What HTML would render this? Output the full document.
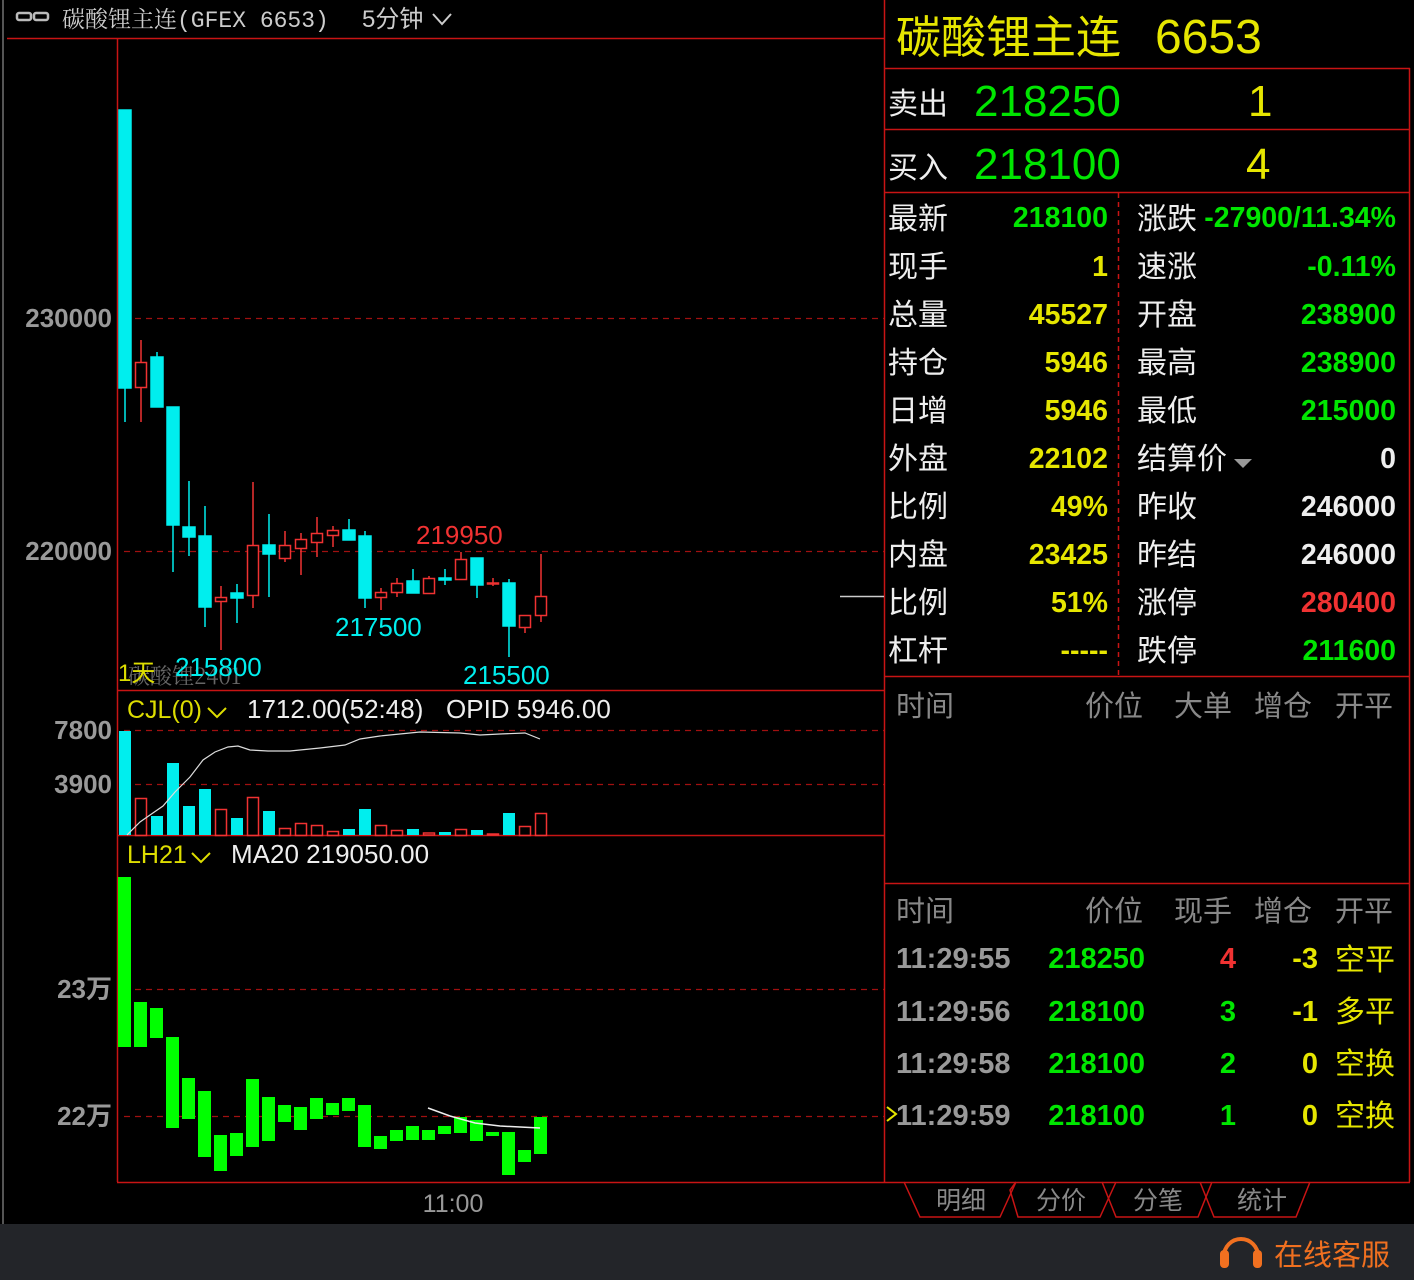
<!DOCTYPE html>
<html><head><meta charset="utf-8"><style>
html,body{margin:0;padding:0;background:#000;width:1414px;height:1280px;overflow:hidden}
svg{display:block}
.c{font-family:"Liberation Sans","Noto Sans CJK SC",sans-serif}
</style></head><body>
<svg width="1414" height="1280" viewBox="0 0 1414 1280" class="c">
<rect width="1414" height="1280" fill="#000"/>
<rect x="0" y="1224" width="1414" height="56" fill="#232529"/>
<line x1="3" y1="0" x2="3" y2="1224" stroke="#555" stroke-width="2"/>
<!-- header -->
<g fill="none" stroke="#bbb" stroke-width="2.5"><rect x="17" y="13" width="14" height="7" rx="2"/><rect x="34" y="13" width="14" height="7" rx="2"/></g>
<text x="62" y="27" font-family="Liberation Mono,'Noto Serif CJK SC',serif" font-size="23" fill="#ccc">碳酸锂主连(GFEX 6653)</text>
<text x="362" y="27" font-family="Liberation Sans,'Noto Sans CJK SC',sans-serif" font-size="24" fill="#ccc">5分钟</text>
<polyline points="433,14 442,24 451,14" fill="none" stroke="#ccc" stroke-width="2"/>
<!-- frames -->
<g stroke="#c81414" stroke-width="1.5" fill="none">
<line x1="7" y1="38.5" x2="884" y2="38.5"/>
<line x1="117.5" y1="38" x2="117.5" y2="1182"/>
<line x1="884.5" y1="0" x2="884.5" y2="1182"/>
<line x1="117" y1="690.5" x2="884" y2="690.5"/>
<line x1="117" y1="835.5" x2="884" y2="835.5"/>
<line x1="117" y1="1182.5" x2="1410" y2="1182.5"/>
</g>
<g stroke="#a01010" stroke-width="1.2" stroke-dasharray="6,5">
<line x1="124" y1="318.5" x2="884" y2="318.5"/>
<line x1="124" y1="551.5" x2="884" y2="551.5"/>
<line x1="124" y1="730.5" x2="884" y2="730.5"/>
<line x1="124" y1="784.5" x2="884" y2="784.5"/>
<line x1="124" y1="989.5" x2="884" y2="989.5"/>
<line x1="124" y1="1116.5" x2="884" y2="1116.5"/>
</g>
<g font-size="26" font-weight="bold" fill="#999" text-anchor="end">
<text x="112" y="327">230000</text><text x="112" y="560">220000</text>
<text x="112" y="739">7800</text><text x="112" y="793">3900</text>
<text x="112" y="998">23万</text><text x="112" y="1125">22万</text>
</g>
<text x="453" y="1212" font-size="25" fill="#999" text-anchor="middle">11:00</text>
<line x1="840" y1="596.5" x2="884" y2="596.5" stroke="#ccc" stroke-width="1.5"/>
<!-- candles -->
<g stroke-width="1.5">
<g fill="#00eeee" stroke="#00eeee">
<line x1="125" y1="110" x2="125" y2="422"/><rect x="119" y="110" width="12" height="278"/>
<line x1="157" y1="352" x2="157" y2="407"/><rect x="151" y="357" width="12" height="50"/>
<line x1="173" y1="407" x2="173" y2="572"/><rect x="167" y="407" width="12" height="118"/>
<line x1="189" y1="481" x2="189" y2="556"/><rect x="183" y="527" width="12" height="10"/>
<line x1="205" y1="506" x2="205" y2="627"/><rect x="199" y="536" width="12" height="71"/>
<line x1="237" y1="584" x2="237" y2="623"/><rect x="231" y="593" width="12" height="5"/>
<line x1="269" y1="514" x2="269" y2="597"/><rect x="263" y="545" width="12" height="9"/>
<line x1="349" y1="519" x2="349" y2="540"/><rect x="343" y="530" width="12" height="10"/>
<line x1="365" y1="531" x2="365" y2="608"/><rect x="359" y="536" width="12" height="62"/>
<line x1="413" y1="569" x2="413" y2="593"/><rect x="407" y="581" width="12" height="12"/>
<line x1="445" y1="569" x2="445" y2="585"/><rect x="439" y="578" width="12" height="2"/>
<line x1="477" y1="558" x2="477" y2="598"/><rect x="471" y="558" width="12" height="27"/>
<line x1="509" y1="579" x2="509" y2="657"/><rect x="503" y="583" width="12" height="43"/>
</g>
<g fill="#000" stroke="#f03232">
<line x1="141" y1="340" x2="141" y2="422"/><rect x="135.5" y="362.5" width="11" height="25"/>
<line x1="221" y1="586" x2="221" y2="650"/><rect x="215.5" y="597.5" width="11" height="4"/>
<line x1="253" y1="482" x2="253" y2="608"/><rect x="247.5" y="545.5" width="11" height="50"/>
<line x1="285" y1="531" x2="285" y2="562"/><rect x="279.5" y="545.5" width="11" height="13"/>
<line x1="301" y1="533" x2="301" y2="575"/><rect x="295.5" y="539.5" width="11" height="9"/>
<line x1="317" y1="517" x2="317" y2="557"/><rect x="311.5" y="533.5" width="11" height="9"/>
<line x1="333" y1="526" x2="333" y2="547"/><rect x="327.5" y="530.5" width="11" height="5"/>
<line x1="381" y1="588" x2="381" y2="610"/><rect x="375.5" y="592.5" width="11" height="5"/>
<line x1="397" y1="578" x2="397" y2="597"/><rect x="391.5" y="583.5" width="11" height="9"/>
<line x1="429" y1="576" x2="429" y2="594"/><rect x="423.5" y="578.5" width="11" height="15"/>
<line x1="461" y1="552" x2="461" y2="580"/><rect x="455.5" y="559.5" width="11" height="20"/>
<line x1="493" y1="578" x2="493" y2="586"/><rect x="487.5" y="583" width="11" height="1"/>
<line x1="525" y1="615" x2="525" y2="633"/><rect x="519.5" y="615.5" width="11" height="12"/>
<line x1="541" y1="554" x2="541" y2="622"/><rect x="535.5" y="596.5" width="11" height="19"/>
</g>
</g>
<g font-size="26">
<text x="416" y="544" fill="#f03232">219950</text>
<text x="335" y="636" fill="#00eeee">217500</text>
<text x="463" y="684" fill="#00eeee">215500</text>
<text x="128" y="684" fill="#666" font-family="'Noto Serif CJK SC',serif" font-size="22">碳酸锂2401</text>
<text x="118" y="681" fill="#dddd00" font-size="24">1天</text>
<text x="175" y="676" fill="#00eeee">215800</text>
</g>
<!-- volume -->
<g fill="#00eeee">
<rect x="119" y="731" width="12" height="104"/><rect x="151" y="816" width="12" height="19"/>
<rect x="167" y="763" width="12" height="72"/><rect x="183" y="806" width="12" height="29"/>
<rect x="199" y="789" width="12" height="46"/><rect x="231" y="818" width="12" height="17"/>
<rect x="263" y="811" width="12" height="24"/><rect x="343" y="829" width="12" height="6"/>
<rect x="359" y="809" width="12" height="26"/><rect x="407" y="829" width="12" height="6"/>
<rect x="439" y="832" width="12" height="3"/><rect x="471" y="830" width="12" height="5"/>
<rect x="503" y="813" width="12" height="22"/>
</g>
<g fill="none" stroke="#f03232" stroke-width="1.5">
<rect x="135.5" y="798.5" width="11" height="37"/><rect x="215.5" y="809.5" width="11" height="26"/>
<rect x="247.5" y="797.5" width="11" height="38"/><rect x="279.5" y="828.5" width="11" height="7"/>
<rect x="295.5" y="823.5" width="11" height="12"/><rect x="311.5" y="825.5" width="11" height="10"/>
<rect x="327.5" y="831.5" width="11" height="4"/><rect x="375.5" y="825.5" width="11" height="10"/>
<rect x="391.5" y="830.5" width="11" height="5"/><rect x="423.5" y="833" width="11" height="2"/>
<rect x="455.5" y="829.5" width="11" height="6"/><rect x="487.5" y="834" width="11" height="1"/>
<rect x="519.5" y="826.5" width="11" height="9"/><rect x="535.5" y="813.5" width="11" height="22"/>
</g>
<polyline fill="none" stroke="#ddd" stroke-width="1.2" points="127,835 140,822 150,815 163,806 175,792 190,777 203,760 215,752 228,747 238,746 250,750 268,751 290,751 320,748 345,745 360,739 380,736 420,732 460,733 480,735 500,734 525,733 540,739"/>
<text x="127" y="718" font-size="25" fill="#dddd00">CJL(0)</text>
<polyline points="208,708 217,717 226,708" fill="none" stroke="#dddd00" stroke-width="2"/>
<text x="247" y="718" font-size="26" fill="#eee">1712.00(52:48)</text>
<text x="446" y="718" font-size="26" fill="#eee">OPID 5946.00</text>
<!-- LH21 -->
<g fill="#00ff00">
<rect x="118" y="877" width="13" height="170"/><rect x="134" y="1002" width="13" height="45"/>
<rect x="150" y="1008" width="13" height="30"/><rect x="166" y="1037" width="13" height="91"/>
<rect x="182" y="1078" width="13" height="41"/><rect x="198" y="1091" width="13" height="66"/>
<rect x="214" y="1135" width="13" height="36"/><rect x="230" y="1133" width="13" height="23"/>
<rect x="246" y="1079" width="13" height="68"/><rect x="262" y="1097" width="13" height="44"/>
<rect x="278" y="1105" width="13" height="17"/><rect x="294" y="1107" width="13" height="23"/>
<rect x="310" y="1098" width="13" height="21"/><rect x="326" y="1103" width="13" height="12"/>
<rect x="342" y="1098" width="13" height="13"/><rect x="358" y="1105" width="13" height="42"/>
<rect x="374" y="1136" width="13" height="13"/><rect x="390" y="1130" width="13" height="11"/>
<rect x="406" y="1126" width="13" height="14"/><rect x="422" y="1130" width="13" height="10"/>
<rect x="438" y="1126" width="13" height="8"/><rect x="454" y="1117" width="13" height="16"/>
<rect x="470" y="1120" width="13" height="21"/><rect x="486" y="1132" width="13" height="4"/>
<rect x="502" y="1132" width="13" height="43"/><rect x="518" y="1150" width="13" height="12"/>
<rect x="534" y="1117" width="13" height="37"/>
</g>
<polyline fill="none" stroke="#eee" stroke-width="1.5" points="428,1108 450,1116 475,1123 500,1126 520,1127 540,1128"/>
<text x="127" y="863" font-size="25" fill="#dddd00">LH21</text>
<polyline points="192,853 201,862 210,853" fill="none" stroke="#dddd00" stroke-width="2"/>
<text x="231" y="863" font-size="26" fill="#eee">MA20 219050.00</text>
<!-- right panel -->
<text x="896" y="53" font-size="45" fill="#e6e600" font-family="'Noto Sans CJK SC',sans-serif">碳酸锂主连</text>
<text x="1155" y="53" font-size="48" fill="#e6e600">6653</text>
<g stroke="#c81414" stroke-width="1.5" fill="none">
<line x1="884" y1="68.5" x2="1410" y2="68.5"/>
<line x1="884" y1="129.5" x2="1410" y2="129.5"/>
<line x1="884" y1="192.5" x2="1410" y2="192.5"/>
<line x1="1409.5" y1="68" x2="1409.5" y2="1182"/>
<line x1="884" y1="676.5" x2="1410" y2="676.5"/>
<line x1="884" y1="883.5" x2="1410" y2="883.5"/>
<line x1="1118.5" y1="193" x2="1118.5" y2="676" stroke-dasharray="5,4"/>
</g>
<g font-family="'Noto Sans CJK SC',sans-serif" font-size="30" fill="#eee">
<text x="888" y="114">卖出</text><text x="888" y="178">买入</text>
</g>
<text x="974" y="116" font-size="44" fill="#00e600">218250</text>
<text x="1248" y="116" font-size="44" fill="#e6e600">1</text>
<text x="974" y="179" font-size="44" fill="#00e600">218100</text>
<text x="1246" y="179" font-size="44" fill="#e6e600">4</text>
<g font-family="'Noto Sans CJK SC',sans-serif" font-size="30" fill="#eee">
<text x="888" y="229">最新</text><text x="888" y="277">现手</text><text x="888" y="325">总量</text>
<text x="888" y="373">持仓</text><text x="888" y="421">日增</text><text x="888" y="469">外盘</text>
<text x="888" y="517">比例</text><text x="888" y="565">内盘</text><text x="888" y="613">比例</text>
<text x="888" y="661">杠杆</text>
<text x="1137" y="229">涨跌</text><text x="1137" y="277">速涨</text><text x="1137" y="325">开盘</text>
<text x="1137" y="373">最高</text><text x="1137" y="421">最低</text><text x="1137" y="469">结算价</text>
<text x="1137" y="517">昨收</text><text x="1137" y="565">昨结</text><text x="1137" y="613">涨停</text>
<text x="1137" y="661">跌停</text>
</g>
<polygon points="1234,459 1252,459 1243,468" fill="#999"/>
<g font-size="28.5" font-weight="bold" text-anchor="end">
<text x="1108" y="227" fill="#00e600">218100</text>
<text x="1108" y="276" fill="#e6e600">1</text>
<text x="1108" y="324" fill="#e6e600">45527</text>
<text x="1108" y="372" fill="#e6e600">5946</text>
<text x="1108" y="420" fill="#e6e600">5946</text>
<text x="1108" y="468" fill="#e6e600">22102</text>
<text x="1108" y="516" fill="#e6e600">49%</text>
<text x="1108" y="564" fill="#e6e600">23425</text>
<text x="1108" y="612" fill="#e6e600">51%</text>
<text x="1108" y="660" fill="#e6e600">-----</text>
<text x="1396" y="227" fill="#00e600">-27900/11.34%</text>
<text x="1396" y="276" fill="#00e600">-0.11%</text>
<text x="1396" y="324" fill="#00e600">238900</text>
<text x="1396" y="372" fill="#00e600">238900</text>
<text x="1396" y="420" fill="#00e600">215000</text>
<text x="1396" y="468" fill="#eee">0</text>
<text x="1396" y="516" fill="#eee">246000</text>
<text x="1396" y="564" fill="#eee">246000</text>
<text x="1396" y="612" fill="#f03232">280400</text>
<text x="1396" y="660" fill="#00e600">211600</text>
</g>
<!-- trades -->
<g font-family="'Noto Sans CJK SC',sans-serif" font-size="29" fill="#888">
<text x="896" y="716">时间</text><text x="1085" y="716">价位</text><text x="1174" y="716">大单</text><text x="1254" y="716">增仓</text><text x="1335" y="716">开平</text>
<text x="896" y="921">时间</text><text x="1085" y="921">价位</text><text x="1174" y="921">现手</text><text x="1254" y="921">增仓</text><text x="1335" y="921">开平</text>
</g>
<g font-size="29" font-weight="bold">
<g fill="#999"><text x="896" y="968">11:29:55</text><text x="896" y="1021">11:29:56</text><text x="896" y="1073">11:29:58</text><text x="896" y="1125">11:29:59</text></g>
<g fill="#00e600" text-anchor="end"><text x="1145" y="968">218250</text><text x="1145" y="1021">218100</text><text x="1145" y="1073">218100</text><text x="1145" y="1125">218100</text></g>
<g text-anchor="end"><text x="1236" y="968" fill="#f03232">4</text><text x="1236" y="1021" fill="#00e600">3</text><text x="1236" y="1073" fill="#00e600">2</text><text x="1236" y="1125" fill="#00e600">1</text></g>
<g fill="#e6e600" text-anchor="end"><text x="1318" y="968">-3</text><text x="1318" y="1021">-1</text><text x="1318" y="1073">0</text><text x="1318" y="1125">0</text></g>
</g>
<g font-family="'Noto Sans CJK SC',sans-serif" font-size="30" fill="#e6e600">
<text x="1335" y="970">空平</text><text x="1335" y="1022">多平</text><text x="1335" y="1074">空换</text><text x="1335" y="1126">空换</text>
</g>
<polyline points="887,1107 896,1114 887,1121" fill="none" stroke="#e6e600" stroke-width="2"/>
<!-- tabs -->
<g fill="none" stroke="#c81414" stroke-width="1.5">
<polyline points="904,1182 920,1217 1000,1217 1016,1182"/>
<polyline points="1016,1182 1010,1190 1018,1217 1100,1217 1116,1182"/>
<polyline points="1102,1182 1116,1217 1198,1217 1212,1182"/>
<polyline points="1200,1182 1214,1217 1296,1217 1310,1182"/>
</g>
<g font-family="'Noto Sans CJK SC',sans-serif" font-size="25" fill="#888" text-anchor="middle">
<text x="961" y="1209">明细</text><text x="1061" y="1209">分价</text><text x="1158" y="1209">分笔</text><text x="1262" y="1209">统计</text>
</g>
<!-- service -->
<path d="M1224,1266 v-10 a17,17 0 0 1 34,0 v10" fill="none" stroke="#f07020" stroke-width="4"/>
<rect x="1220" y="1250" width="9" height="18" rx="4" fill="#f07020"/>
<rect x="1253" y="1250" width="9" height="18" rx="4" fill="#f07020"/>
<text x="1274" y="1265" font-family="'Noto Sans CJK SC',sans-serif" font-size="29" fill="#f07020">在线客服</text>
</svg>
</body></html>
